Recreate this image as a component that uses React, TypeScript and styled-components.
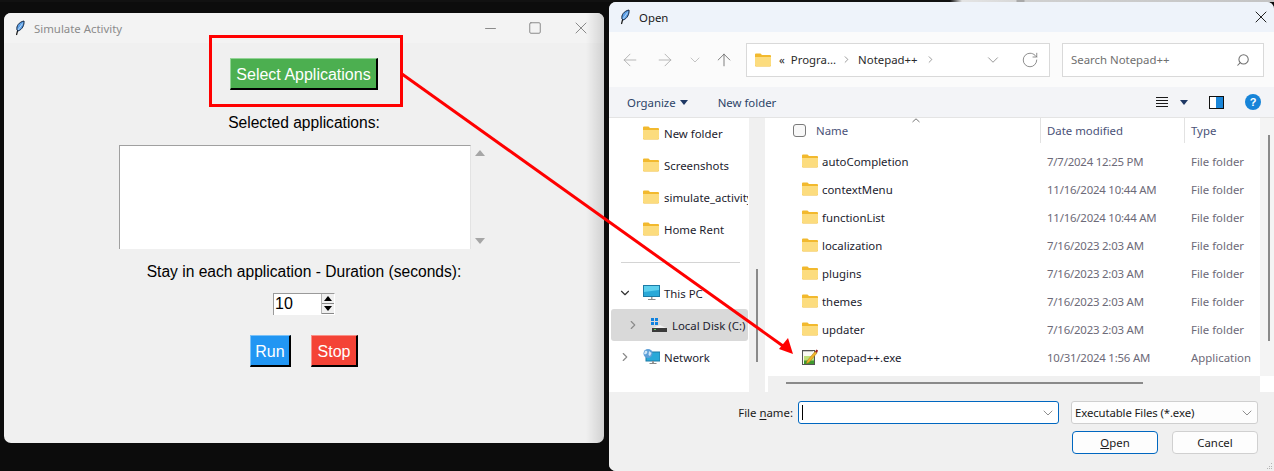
import React from 'react';
import styled, { createGlobalStyle } from 'styled-components';
import { ArrowLeft, ArrowRight, ArrowUp, ChevronDown, ChevronRight, RotateCw, Search, X, Minus, Square } from 'lucide-react';

const GlobalStyle = createGlobalStyle`
  html, body {
    margin: 0;
    padding: 0;
    width: 1274px;
    height: 471px;
    overflow: hidden;
  }
  * {
    box-sizing: border-box;
  }
`;

const Desktop = styled.div`
  position: relative;
  width: 1274px;
  height: 471px;
  overflow: hidden;
  background:
    linear-gradient(90deg, #111 0, #111 950px, #e4e4e4 962px, #d8d8d8 1016px, #a9a9a9 1017px, #a9a9a9 1024px, #d0d0d0 1025px, #c4c4c4 100%) top / 100% 2px no-repeat,
    #0c0c0c;
`;

/* tkinter window */
const TkWindow = styled.div`
  position: absolute;
  left: 4px;
  top: 13px;
  width: 600px;
  height: 430px;
  display: flex;
  flex-direction: column;
  background: #f0f0f0;
  border-radius: 7px;
  overflow: hidden;
  font-family: 'Liberation Sans', Arial, sans-serif;

  &::after {
    content: '';
    position: absolute;
    top: 0;
    right: 0;
    width: 18px;
    height: 100%;
    background: linear-gradient(90deg, rgba(0, 0, 0, 0), rgba(0, 0, 0, 0.13));
  }
`;

const TkTitleBar = styled.div`
  height: 30px;
  flex: none;
  display: flex;
  align-items: center;
  padding-left: 10px;
  background: #f3f3f3;
  font-family: 'Noto Sans', sans-serif;
  font-size: 11.4px;
  color: #8b8b8b;
`;

const TkTitle = styled.span`
  margin-left: 8px;
  flex: 1;
`;

const WinControls = styled.div`
  display: flex;
  align-items: center;
  color: #8a8a8a;
  padding-right: 13px;
  gap: 29px;
`;

const TkBody = styled.div`
  display: flex;
  flex-direction: column;
  align-items: center;
  padding-top: 15px;
`;

const TkButton = styled.button<{ $bg: string; $light: string; $width: number }>`
  width: ${(p) => p.$width}px;
  height: 32px;
  padding: 2px 0 0;
  background: ${(p) => p.$bg};
  color: #fff;
  font-family: 'Liberation Sans', Arial, sans-serif;
  font-size: 16px;
  border-style: solid;
  border-width: 1px 2px 2px 1px;
  border-color: ${(p) => p.$light} #000 #000 ${(p) => p.$light};
`;

const TkLabel = styled.div<{ $top: number }>`
  margin-top: ${(p) => p.$top}px;
  font-size: 15.6px;
  line-height: 18px;
  color: #000;
`;

const ListRow = styled.div`
  display: flex;
  margin-top: 13px;
`;

const ListBox = styled.div`
  width: 352px;
  height: 104px;
  background: #fff;
  border-style: solid;
  border-width: 1px 1px 0 1px;
  border-color: #a0a0a0 #e3e3e3 #fff #a0a0a0;
`;

const ScrollArrows = styled.div`
  width: 19px;
  height: 104px;
  padding: 5px 0 5px;
  display: flex;
  flex-direction: column;
  justify-content: space-between;
  align-items: center;
`;

const Triangle = styled.span<{ $down?: boolean; $size: number; $color: string }>`
  display: block;
  width: 0;
  height: 0;
  border-left: ${(p) => p.$size}px solid transparent;
  border-right: ${(p) => p.$size}px solid transparent;
  ${(p) => (p.$down ? 'border-top' : 'border-bottom')}: ${(p) => p.$size + 1}px solid ${(p) => p.$color};
`;

const SpinBox = styled.div`
  margin-top: 12px;
  width: 62px;
  height: 22px;
  display: flex;
  background: #fff;
  border-style: solid;
  border-width: 1px 1px 0 1px;
  border-color: #9a9a9a #fff #fff #9a9a9a;
`;

const SpinValue = styled.div`
  flex: 1;
  font-size: 16px;
  line-height: 20px;
  padding-left: 1px;
  color: #000;
`;

const SpinButtons = styled.div`
  width: 13px;
  height: 20px;
  display: flex;
  flex-direction: column;
  border-left: 1px solid #b5b5b5;
`;

const SpinStep = styled.div`
  flex: 1;
  display: flex;
  align-items: center;
  justify-content: center;
  background: #f0f0f0;
  border-bottom: 1px solid #888;
`;

const ButtonRow = styled.div`
  display: flex;
  gap: 20px;
  margin-top: 20px;
`;

/* file dialog */
const Dialog = styled.div`
  position: absolute;
  left: 609px;
  top: 2px;
  width: 665px;
  height: 469px;
  display: flex;
  flex-direction: column;
  background: #f0f0f0;
  border-radius: 7px 7px 0 7px;
  overflow: hidden;
  font-family: 'Noto Sans', sans-serif;
  font-size: 11.4px;
  color: #1a1a1a;
`;

const DialogTitleBar = styled.div`
  height: 30px;
  flex: none;
  display: flex;
  align-items: center;
  padding: 0 3px 0 10px;
  background: #eef3fa;
`;

const DialogTitle = styled.span`
  flex: 1;
  margin-left: 8px;
`;

const NavBar = styled.div`
  height: 55px;
  flex: none;
  display: flex;
  align-items: center;
  padding: 0 10px 0 11px;
  background: #fbfbfb;
`;

const NavIcon = styled.span<{ $left: number; $color: string }>`
  display: flex;
  margin-left: ${(p) => p.$left}px;
  color: ${(p) => p.$color};
`;

const AddressBox = styled.div`
  width: 304px;
  height: 34px;
  margin-left: 12px;
  display: flex;
  align-items: center;
  padding: 0 10px 0 8px;
  background: #fff;
  border: 1px solid #d9d9d9;
  color: #2a2a2a;
`;

const Crumb = styled.span<{ $left: number }>`
  display: flex;
  align-items: center;
  margin-left: ${(p) => p.$left}px;
`;

const Spacer = styled.span`
  flex: 1;
`;

const SearchBox = styled.div`
  width: 202px;
  height: 34px;
  margin-left: 12px;
  display: flex;
  align-items: center;
  justify-content: space-between;
  padding: 0 13px 0 8px;
  background: #fff;
  border: 1px solid #d9d9d9;
  color: #6f6f6f;
`;

const SearchGlyph = styled.span`
  display: flex;
  transform: scaleX(-1);
`;

const CommandBar = styled.div`
  height: 31px;
  flex: none;
  display: flex;
  align-items: center;
  padding: 0 13px 0 18px;
  background: #f3f4f7;
  border-bottom: 1px solid #e4e4e4;
  color: #2d4468;
`;

const CommandLabel = styled.span<{ $left?: number }>`
  display: flex;
  margin-left: ${(p) => p.$left ?? 0}px;
`;

const Main = styled.div`
  height: 274px;
  flex: none;
  display: flex;
  background: #fff;
`;

const Sidebar = styled.nav`
  width: 140px;
  flex: none;
  padding: 0 1px 0 2px;
  background: #fff;
`;

const SideList = styled.div`
  margin-top: -1px;
`;

const SideItem = styled.div<{ $height: number; $indent: number; $active?: boolean }>`
  height: ${(p) => p.$height}px;
  display: flex;
  align-items: center;
  padding-left: ${(p) => p.$indent}px;
  border-radius: 3px;
  background: ${(p) => (p.$active ? '#d9d9d9' : 'transparent')};
  white-space: nowrap;
  overflow: hidden;
  color: #1c1c2e;
`;

const SideIcon = styled.span`
  display: flex;
  width: 21px;
  flex: none;
`;

const Expander = styled.span`
  display: flex;
  width: 32px;
  flex: none;
  color: #8c8c8c;
  padding-left: 7px;
`;

const SideDivider = styled.div`
  height: 1px;
  margin: 17px 8px 14px 10px;
  background: #d4d4d4;
`;

const SideGutter = styled.div`
  width: 16px;
  flex: none;
  padding: 151px 0 0 7px;
  background: #f0f0f0;
`;

const VerticalThumb = styled.div<{ $height: number }>`
  width: 2px;
  height: ${(p) => p.$height}px;
  background: #8a8a8a;
`;

const ListPane = styled.div`
  flex: 1;
  margin-left: 3px;
  display: flex;
  flex-direction: column;
  min-width: 0;
`;

const ListArea = styled.div`
  flex: 1;
  display: flex;
`;

const Columns = styled.div`
  flex: 1;
  min-width: 0;
`;

const HeaderRow = styled.div`
  position: relative;
  height: 29px;
  display: grid;
  grid-template-columns: 272px 144px 1fr;
  color: #4a5278;
`;

const HeaderCell = styled.div<{ $divided?: boolean; $left: number }>`
  height: 25px;
  display: flex;
  align-items: center;
  padding-left: ${(p) => p.$left}px;
  border-left: ${(p) => (p.$divided ? '1px solid #e2e2e2' : 'none')};
`;

const CheckBox = styled.span`
  width: 13px;
  height: 13px;
  margin-right: 10px;
  background: #f8f8f8;
  border: 1px solid #7a7a7a;
  border-radius: 3px;
`;

const SortCaret = styled.svg`
  position: absolute;
  left: 144px;
  top: 0;
`;

const FileRow = styled.div`
  height: 28px;
  display: grid;
  grid-template-columns: 272px 144px 1fr;
  align-items: center;
  color: #6d6a78;
`;

const NameCell = styled.div`
  display: flex;
  align-items: center;
  padding-left: 34px;
  color: #1c1c2e;
`;

const FileIcon = styled.span`
  display: flex;
  width: 20px;
  flex: none;
`;

const DateCell = styled.div`
  padding-left: 7px;
  letter-spacing: -0.2px;
`;

const TypeCell = styled.div`
  padding-left: 7px;
`;

const RightGutter = styled.div`
  width: 14px;
  flex: none;
  padding: 17px 0 0 8px;
  background: #f4f4f4;
`;

const ScrollFooter = styled.div`
  height: 16px;
  flex: none;
  display: flex;
`;

const HorizontalTrack = styled.div`
  flex: 1;
  padding: 6px 0 0 18px;
  background: #f0f0f0;
`;

const HorizontalThumb = styled.div`
  width: 357px;
  height: 2px;
  background: #8a8a8a;
`;

const Corner = styled.div`
  width: 14px;
  flex: none;
  background: #fff;
`;

const Footer = styled.div`
  position: relative;
  flex: 1;
  padding: 9px 16px 0 0;
  background: #f0f0f0;
`;

const FooterRow = styled.div<{ $top?: number }>`
  display: flex;
  justify-content: flex-end;
  align-items: center;
  margin-top: ${(p) => p.$top ?? 0}px;
`;

const FileLabel = styled.label`
  margin-right: 5px;
  color: #1a1a1a;
  u {
    text-underline-offset: 2px;
  }
`;

const NameInput = styled.div`
  width: 261px;
  height: 23px;
  display: flex;
  align-items: center;
  justify-content: space-between;
  padding: 0 2px 0 3px;
  background: #fff;
  border: 1px solid #0067c0;
  border-radius: 3px;
  color: #666;
`;

const Caret = styled.span`
  width: 1px;
  height: 15px;
  background: #000;
`;

const TypeSelect = styled.div`
  width: 187px;
  height: 23px;
  margin-left: 12px;
  display: flex;
  align-items: center;
  justify-content: space-between;
  padding: 0 2px 0 3px;
  background: #fdfdfd;
  border: 1px solid #cfcfcf;
  border-radius: 3px;
  color: #1a1a1a;
  letter-spacing: -0.12px;
  svg {
    color: #666;
  }
`;

const DialogButton = styled.button<{ $primary?: boolean }>`
  width: 86px;
  height: 23px;
  padding: 0;
  margin-left: 14px;
  background: #fdfdfd;
  border: 1px solid ${(p) => (p.$primary ? '#0067c0' : '#d0d0d0')};
  border-radius: 4px;
  font-family: 'Noto Sans', sans-serif;
  font-size: 11.4px;
  color: #1a1a1a;
`;

const ResizeGrip = styled.svg`
  position: absolute;
  right: 1px;
  bottom: 1px;
`;

const Annotation = styled.svg`
  position: absolute;
  inset: 0;
  pointer-events: none;
`;

const Feather = () => (
  <svg width="12" height="16" viewBox="0 0 12 16">
    <path d="M2.5 15 L4 9" stroke="#111" strokeWidth="1.2" fill="none" />
    <path d="M3 10 C2 6 5 2 10 1 C10.5 5 8 10 4 11 Z" fill="#5b9fe6" stroke="#10233f" strokeWidth="1" />
    <path d="M4 10 L8.5 3.5" stroke="#cfe4fa" strokeWidth="0.8" />
  </svg>
);

const Folder = () => (
  <svg width="16" height="14" viewBox="0 0 16 14">
    <path d="M0 1.5 A1 1 0 0 1 1 .5 H5.5 L7 2 H15 A1 1 0 0 1 16 3 V12.5 A1 1 0 0 1 15 13.5 H1 A1 1 0 0 1 0 12.5 Z" fill="#f2b92e" />
    <path d="M0 4 H16 V12 A1 1 0 0 1 15 13 H1 A1 1 0 0 1 0 12 Z" fill="#fcdc7e" />
  </svg>
);

const Monitor = () => (
  <svg width="17" height="16" viewBox="0 0 17 16">
    <rect x=".5" y=".5" width="16" height="11" fill="#2aa9d8" stroke="#1c7ba6" />
    <path d="M1 1 H16 V5 L1 7 Z" fill="#5ed0ee" />
    <path d="M8 12 H9.5 V14 H8 Z" fill="#999" />
    <path d="M5 14 H12.5 V15 H5 Z" fill="#888" />
  </svg>
);

const DiskIcon = () => (
  <svg width="16" height="15" viewBox="0 0 16 15">
    <rect x="0" y="0" width="3" height="3" fill="#1083e0" />
    <rect x="4" y="0" width="3" height="3" fill="#1083e0" />
    <rect x="0" y="4" width="3" height="3" fill="#1083e0" />
    <rect x="4" y="4" width="3" height="3" fill="#1083e0" />
    <path d="M2 10 L9 7 L15 10 Z" fill="#f2f2f2" />
    <rect x="1" y="10" width="15" height="4" fill="#3b3b3b" />
    <rect x="3" y="11" width="2" height="1" fill="#5bd45b" />
  </svg>
);

const NetworkIcon = () => (
  <svg width="17" height="16" viewBox="0 0 17 16">
    <rect x="3" y="3" width="14" height="9" fill="#2aa9d8" stroke="#1c7ba6" />
    <path d="M9 12 H11 V14 H9 Z" fill="#999" />
    <path d="M6.5 14 H13.5 V15 H6.5 Z" fill="#888" />
    <circle cx="5" cy="4.5" r="4.5" fill="#5e9fd8" />
    <path d="M2 2 C4 1 5 3 4 4 C3 6 2 5 1 5 Z M6 2 L8.5 4 L7 7 L5.5 6 Z" fill="#cfe6f7" />
  </svg>
);

const NotepadIcon = () => (
  <svg width="16" height="16" viewBox="0 0 16 16">
    <rect x=".5" y="1.5" width="12" height="14" fill="#fbfbf4" stroke="#555" />
    <path d="M1.5 2.5 H11.5" stroke="#999" strokeDasharray="1 1" />
    <path d="M2 7 H12 V15 H2 Z" fill="#bfe07a" />
    <path d="M2 11.5 H12 V15 H2 Z" fill="#3f9a2f" />
    <path d="M5 12 L13 2.5 L15 4 L7 13.5 L4.5 14.5 Z" fill="#f0b429" stroke="#a8741a" strokeWidth=".5" />
    <path d="M13 2.5 L14.5 .5 L16 1.5 L15 4 Z" fill="#9b1c1c" />
  </svg>
);

const Hamburger = () => (
  <svg width="12" height="11" viewBox="0 0 12 11">
    <path d="M0 .5 H12 M0 3.5 H12 M0 6.5 H12 M0 9.5 H12" stroke="#1a1a1a" strokeWidth="1" />
  </svg>
);

const PaneIcon = () => (
  <svg width="15" height="13" viewBox="0 0 15 13">
    <rect x=".5" y=".5" width="14" height="12" fill="#fff" stroke="#111" />
    <rect x="7" y="1" width="7" height="11" fill="#1a86d9" />
  </svg>
);

const HelpIcon = () => (
  <svg width="16" height="16" viewBox="0 0 16 16">
    <circle cx="8" cy="8" r="8" fill="#1784d8" />
    <text x="8" y="12" textAnchor="middle" fontFamily="Liberation Sans, sans-serif" fontWeight="700" fontSize="11" fill="#fff">?</text>
  </svg>
);

const sideFolders = ['New folder', 'Screenshots', 'simulate_activity', 'Home Rent'];

const files = [
  { name: 'autoCompletion', date: '7/7/2024 12:25 PM', type: 'File folder' },
  { name: 'contextMenu', date: '11/16/2024 10:44 AM', type: 'File folder' },
  { name: 'functionList', date: '11/16/2024 10:44 AM', type: 'File folder' },
  { name: 'localization', date: '7/16/2023 2:03 AM', type: 'File folder' },
  { name: 'plugins', date: '7/16/2023 2:03 AM', type: 'File folder' },
  { name: 'themes', date: '7/16/2023 2:03 AM', type: 'File folder' },
  { name: 'updater', date: '7/16/2023 2:03 AM', type: 'File folder' },
  { name: 'notepad++.exe', date: '10/31/2024 1:56 AM', type: 'Application' },
];

const App: React.FC = () => {
  return (
    <Desktop>
      <GlobalStyle />
      <TkWindow>
        <TkTitleBar>
          <Feather />
          <TkTitle>Simulate Activity</TkTitle>
          <WinControls>
            <Minus size={17} strokeWidth={1.4} />
            <Square size={14} strokeWidth={1.7} />
            <X size={20} strokeWidth={1.2} />
          </WinControls>
        </TkTitleBar>
        <TkBody>
          <TkButton $bg="#4caf50" $light="#93d496" $width={148}>Select Applications</TkButton>
          <TkLabel $top={24}>Selected applications:</TkLabel>
          <ListRow>
            <ListBox />
            <ScrollArrows>
              <Triangle $size={5} $color="#a6a6a6" />
              <Triangle $size={5} $down $color="#a6a6a6" />
            </ScrollArrows>
          </ListRow>
          <TkLabel $top={14}>Stay in each application - Duration (seconds):</TkLabel>
          <SpinBox>
            <SpinValue>10</SpinValue>
            <SpinButtons>
              <SpinStep><Triangle $size={4} $color="#000" /></SpinStep>
              <SpinStep><Triangle $size={4} $down $color="#000" /></SpinStep>
            </SpinButtons>
          </SpinBox>
          <ButtonRow>
            <TkButton $bg="#2196f3" $light="#79c1f8" $width={41}>Run</TkButton>
            <TkButton $bg="#f44336" $light="#f98f87" $width={47}>Stop</TkButton>
          </ButtonRow>
        </TkBody>
      </TkWindow>

      <Dialog>
        <DialogTitleBar>
          <Feather />
          <DialogTitle>Open</DialogTitle>
          <X size={20} strokeWidth={1.2} color="#222" />
        </DialogTitleBar>
        <NavBar>
          <NavIcon $left={0} $color="#a8a8a8"><ArrowLeft size={20} strokeWidth={1} /></NavIcon>
          <NavIcon $left={15} $color="#a8a8a8"><ArrowRight size={20} strokeWidth={1} /></NavIcon>
          <NavIcon $left={12} $color="#a8a8a8"><ChevronDown size={16} strokeWidth={1} /></NavIcon>
          <NavIcon $left={11} $color="#666"><ArrowUp size={20} strokeWidth={1} /></NavIcon>
          <AddressBox>
            <Folder />
            <Crumb $left={8}>«</Crumb>
            <Crumb $left={6}>Progra...</Crumb>
            <Crumb $left={5}><ChevronRight size={11} strokeWidth={1.4} color="#666" /></Crumb>
            <Crumb $left={6}>Notepad++</Crumb>
            <Crumb $left={7}><ChevronRight size={11} strokeWidth={1.4} color="#666" /></Crumb>
            <Spacer />
            <NavIcon $left={0} $color="#777"><ChevronDown size={18} strokeWidth={1} /></NavIcon>
            <NavIcon $left={19} $color="#777"><RotateCw size={18} strokeWidth={1.1} /></NavIcon>
          </AddressBox>
          <SearchBox>
            Search Notepad++
            <SearchGlyph><Search size={14} strokeWidth={1.8} /></SearchGlyph>
          </SearchBox>
        </NavBar>
        <CommandBar>
          <CommandLabel>Organize</CommandLabel>
          <CommandLabel $left={4}><Triangle $size={4} $down $color="#1f3864" /></CommandLabel>
          <CommandLabel $left={30}>New folder</CommandLabel>
          <Spacer />
          <Hamburger />
          <CommandLabel $left={12}><Triangle $size={4} $down $color="#1f3864" /></CommandLabel>
          <CommandLabel $left={21}><PaneIcon /></CommandLabel>
          <CommandLabel $left={21}><HelpIcon /></CommandLabel>
        </CommandBar>
        <Main>
          <Sidebar>
            <SideList>
              {sideFolders.map((name) => (
                <SideItem key={name} $height={32} $indent={32}>
                  <SideIcon><Folder /></SideIcon>
                  {name}
                </SideItem>
              ))}
              <SideDivider />
              <SideItem $height={32} $indent={0}>
                <Expander><ChevronDown size={14} strokeWidth={2} color="#333" /></Expander>
                <SideIcon><Monitor /></SideIcon>
                This PC
              </SideItem>
              <SideItem $height={32} $indent={8} $active>
                <Expander><ChevronRight size={14} strokeWidth={2} /></Expander>
                <SideIcon><DiskIcon /></SideIcon>
                Local Disk (C:)
              </SideItem>
              <SideItem $height={32} $indent={0}>
                <Expander><ChevronRight size={14} strokeWidth={2} /></Expander>
                <SideIcon><NetworkIcon /></SideIcon>
                Network
              </SideItem>
            </SideList>
          </Sidebar>
          <SideGutter>
            <VerticalThumb $height={93} />
          </SideGutter>
          <ListPane>
            <ListArea>
              <Columns>
                <HeaderRow>
                  <HeaderCell $left={25}>
                    <CheckBox />
                    Name
                  </HeaderCell>
                  <HeaderCell $left={6} $divided>Date modified</HeaderCell>
                  <HeaderCell $left={6} $divided>Type</HeaderCell>
                  <SortCaret width="8" height="5" viewBox="0 0 8 5">
                    <path d="M.5 4 L4 .8 L7.5 4" fill="none" stroke="#777" />
                  </SortCaret>
                </HeaderRow>
                {files.map((file) => (
                  <FileRow key={file.name}>
                    <NameCell>
                      <FileIcon>{file.type === 'Application' ? <NotepadIcon /> : <Folder />}</FileIcon>
                      {file.name}
                    </NameCell>
                    <DateCell>{file.date}</DateCell>
                    <TypeCell>{file.type}</TypeCell>
                  </FileRow>
                ))}
              </Columns>
              <RightGutter>
                <VerticalThumb $height={206} />
              </RightGutter>
            </ListArea>
            <ScrollFooter>
              <HorizontalTrack>
                <HorizontalThumb />
              </HorizontalTrack>
              <Corner />
            </ScrollFooter>
          </ListPane>
        </Main>
        <Footer>
          <FooterRow>
            <FileLabel>File <u>n</u>ame:</FileLabel>
            <NameInput>
              <Caret />
              <ChevronDown size={16} strokeWidth={1.1} />
            </NameInput>
            <TypeSelect>
              Executable Files (*.exe)
              <ChevronDown size={16} strokeWidth={1.1} />
            </TypeSelect>
          </FooterRow>
          <FooterRow $top={7}>
            <DialogButton $primary><u>O</u>pen</DialogButton>
            <DialogButton>Cancel</DialogButton>
          </FooterRow>
          <ResizeGrip width="7" height="7" viewBox="0 0 7 7">
            <path d="M5 0 h1 v1 h-1 Z M3 3 h1 v1 h-1 Z M5 3 h1 v1 h-1 Z M1 5 h1 v1 h-1 Z M3 5 h1 v1 h-1 Z M5 5 h1 v1 h-1 Z" fill="#b5b5b5" />
          </ResizeGrip>
        </Footer>
      </Dialog>

      <Annotation width="1274" height="471" viewBox="0 0 1274 471">
        <rect x="210.5" y="36.5" width="191" height="69" fill="none" stroke="#f00" strokeWidth="3" />
        <path d="M402 74 L783 346" stroke="#f00" strokeWidth="3" fill="none" />
        <path d="M793 354 L779 349 L788 338 Z" fill="#f00" />
      </Annotation>
    </Desktop>
  );
};

export default App;
